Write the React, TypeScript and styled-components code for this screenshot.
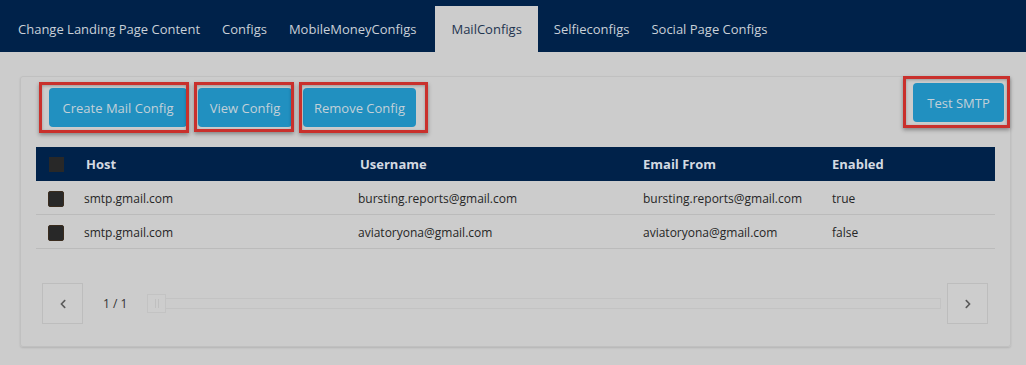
import styled, { createGlobalStyle } from 'styled-components'
import { FaChevronLeft, FaChevronRight } from 'react-icons/fa'

const GlobalStyle = createGlobalStyle`
  html, body {
    margin: 0;
    padding: 0;
    background: #cccccc;
    font-family: "Open Sans", "DejaVu Sans", sans-serif;
  }
  * { box-sizing: border-box; }
`

const Nav = styled.nav`
  height: 52px;
  background: #00224a;
  display: flex;
  align-items: flex-end;
  padding-left: 7px;
`

const Tab = styled.div<{ $active?: boolean }>`
  height: 46px;
  display: flex;
  align-items: center;
  font-size: 13px;
  padding: 0 ${p => (p.$active ? '16px' : '11px')};
  margin: ${p => (p.$active ? '0 5px 0 8px' : '0')};
  background: ${p => (p.$active ? '#cccccc' : 'transparent')};
  color: ${p => (p.$active ? '#1f3550' : '#c9d0d8')};
  white-space: nowrap;
`

const Panel = styled.section`
  margin: 24px 15px 18px 20px;
  border: 1px solid #c0c0c0;
  border-radius: 3px;
  box-shadow: 0 1px 2px rgba(0, 0, 0, 0.12);
  padding: 0 15px 22px;
  height: 271px;
`

const Toolbar = styled.div`
  display: flex;
  justify-content: space-between;
  align-items: flex-start;
  padding-top: 6px;
  margin: 0 -9px 0 13px;
`

const ButtonGroup = styled.div`
  display: flex;
  gap: 11px;
  margin-top: 5px;
`

const Marked = styled.span<{ $t: number; $r: number; $b: number; $l: number }>`
  position: relative;
  display: inline-flex;

  &::after {
    content: '';
    position: absolute;
    top: -${p => p.$t}px;
    right: -${p => p.$r}px;
    bottom: -${p => p.$b}px;
    left: -${p => p.$l}px;
    border: 3px solid #c9302c;
    box-shadow: 0 2px 4px rgba(0, 0, 0, 0.35), inset 0 1px 3px rgba(0, 0, 0, 0.25);
    pointer-events: none;
  }
`

const Button = styled.button<{ $w: number }>`
  width: ${p => p.$w}px;
  height: 39px;
  border: none;
  border-radius: 4px;
  background: #2190c0;
  color: #c3d0d8;
  font-family: inherit;
  font-size: 13px;
  padding: 0;
  cursor: pointer;
`

const Table = styled.div`
  margin-top: 20px;
`

const Row = styled.div<{ $head?: boolean }>`
  display: grid;
  grid-template-columns: 48px 276px 283px 189px 1fr;
  align-items: center;
  height: 34px;
  padding-top: ${p => (p.$head ? 0 : 2)}px;
  background: ${p => (p.$head ? '#00224a' : 'transparent')};
  border-bottom: ${p => (p.$head ? 'none' : '1px solid #bbbbbb')};
  font-size: ${p => (p.$head ? '13px' : '12px')};
  font-weight: ${p => (p.$head ? 700 : 400)};
  color: ${p => (p.$head ? '#d4dae2' : '#262626')};
`

const Cell = styled.div<{ $shift?: number }>`
  white-space: nowrap;
  margin-left: ${p => p.$shift ?? 0}px;
`

const Check = styled.span<{ $head?: boolean }>`
  display: block;
  width: ${p => (p.$head ? 15 : 16)}px;
  height: ${p => (p.$head ? 15 : 16)}px;
  margin-left: ${p => (p.$head ? 13 : 12)}px;
  background: #282828;
  border-radius: ${p => (p.$head ? 0 : 2)}px;
  border: ${p => (p.$head ? 'none' : '1px solid #3a2c1e')};
`

const Pager = styled.div`
  display: flex;
  align-items: center;
  margin: 34px 7px 0 6px;
`

const PageButton = styled.button`
  width: 41px;
  height: 41px;
  flex: none;
  border: 1px solid #bdbdbd;
  background: #cdcdcd;
  color: #5a5a5a;
  display: flex;
  align-items: center;
  justify-content: center;
  padding: 0;
`

const PageLabel = styled.span`
  font-size: 12px;
  color: #333;
  margin: 0 20px 0 20px;
`

const Track = styled.div`
  flex: 1;
  height: 11px;
  border: 1px solid #c3c3c3;
  display: flex;
  align-items: center;
  margin-right: 6px;
`

const Thumb = styled.span`
  width: 19px;
  height: 19px;
  border: 1px solid #c3c3c3;
  background: #cdcdcd;
  margin-left: -1px;
  display: flex;
  align-items: center;
  justify-content: center;
  gap: 2px;

  &::before,
  &::after {
    content: '';
    width: 1px;
    height: 9px;
    background: #c0c0c0;
  }
`

const rows = [
  ['smtp.gmail.com', 'bursting.reports@gmail.com', 'bursting.reports@gmail.com', 'true'],
  ['smtp.gmail.com', 'aviatoryona@gmail.com', 'aviatoryona@gmail.com', 'false'],
]

const columns = ['Host', 'Username', 'Email From', 'Enabled']

const tabs = [
  'Change Landing Page Content',
  'Configs',
  'MobileMoneyConfigs',
  'MailConfigs',
  'Selfieconfigs',
  'Social Page Configs',
]

export default function App() {
  return (
    <>
      <GlobalStyle />
      <Nav>
        {tabs.map(t => (
          <Tab key={t} $active={t === 'MailConfigs'}>
            {t}
          </Tab>
        ))}
      </Nav>

      <Panel>
        <Toolbar>
          <ButtonGroup>
            <Marked $t={6} $r={2} $b={6} $l={10}>
              <Button $w={138}>Create Mail Config</Button>
            </Marked>
            <Marked $t={6} $r={2} $b={5} $l={4}>
              <Button $w={94}>View Config</Button>
            </Marked>
            <Marked $t={6} $r={12} $b={6} $l={4}>
              <Button $w={113}>Remove Config</Button>
            </Marked>
          </ButtonGroup>
          <Marked $t={7} $r={6} $b={6} $l={10}>
            <Button $w={91}>Test SMTP</Button>
          </Marked>
        </Toolbar>

        <Table>
          <Row $head>
            <Check $head />
            {columns.map((c, i) => (
              <Cell key={c} $shift={i === 0 ? 2 : 0}>
                {c}
              </Cell>
            ))}
          </Row>
          {rows.map((r, i) => (
            <Row key={i}>
              <Check />
              {r.map((c, j) => (
                <Cell key={j} $shift={j === 1 ? -2 : 0}>
                  {c}
                </Cell>
              ))}
            </Row>
          ))}
        </Table>

        <Pager>
          <PageButton>
            <FaChevronLeft size={10} />
          </PageButton>
          <PageLabel>1 / 1</PageLabel>
          <Track>
            <Thumb />
          </Track>
          <PageButton>
            <FaChevronRight size={10} />
          </PageButton>
        </Pager>
      </Panel>
    </>
  )
}
